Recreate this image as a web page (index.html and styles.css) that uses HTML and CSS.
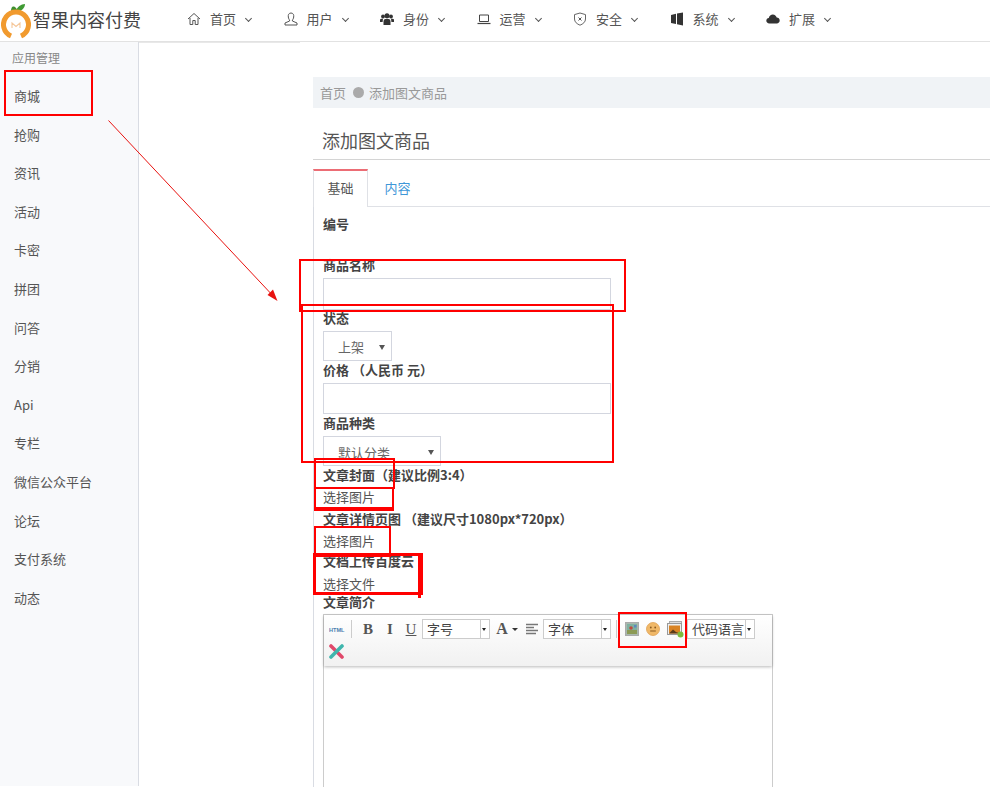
FILE: index.html
```html
<!DOCTYPE html>
<html lang="zh-CN">
<head>
<meta charset="utf-8">
<title>添加图文商品</title>
<link rel="stylesheet" href="styles.css">
</head>
<body>
<div class="page">
  <header class="topbar">
    <div class="brand">
      <svg class="logo" width="30" height="38" viewBox="0 0 30 38">
        <path d="M10 9 C10 5 12 3 15 6 L17 9 Z" fill="#3f8f2f"/>
        <path d="M15 9 C16 5 20 2 24 2 C24 6 20 10 15 10 Z" fill="#3f9a33"/>
        <path d="M10 34 A12.5 12.5 0 1 1 20 34" fill="none" stroke="#f19a2e" stroke-width="5"/>
        <circle cx="15" cy="23" r="9" fill="#fff"/>
        <path d="M11 26 V21 L15 24.5 L19 21 V26" fill="none" stroke="#f5c79a" stroke-width="1.1"/>
      </svg>
      <span class="brand-name">智果内容付费</span>
    </div>
    <nav class="nav">
      <a class="nav-item"><svg class="nav-icon" viewBox="0 0 14 14"><path d="M1 7 L7 1.5 L13 7 M3 6 V12.5 H5.8 V8.5 H8.2 V12.5 H11 V6" fill="none" stroke="#555" stroke-width="1"/></svg><span>首页</span><i class="chev"></i></a>
      <a class="nav-item"><svg class="nav-icon" viewBox="0 0 14 14"><path d="M7 1 C9.3 1 10 3 9.7 5 C9.5 6.6 8.8 7.6 8.4 8 V9 L13 11 V13 H1 V11 L5.6 9 V8 C5.2 7.6 4.5 6.6 4.3 5 C4 3 4.7 1 7 1 Z" fill="none" stroke="#555" stroke-width="1"/></svg><span>用户</span><i class="chev"></i></a>
      <a class="nav-item"><svg class="nav-icon" viewBox="0 0 14 14"><circle cx="3" cy="4.5" r="1.9" fill="#333"/><circle cx="11" cy="4.5" r="1.9" fill="#333"/><circle cx="7" cy="3.8" r="2.5" fill="#333"/><path d="M3.5 13 V9.5 C3.5 7.5 5 6.8 7 6.8 C9 6.8 10.5 7.5 10.5 9.5 V13 Z M0 10 V8 C0 7 1 6.8 3 6.8 L2.6 10 Z M14 10 V8 C14 7 13 6.8 11 6.8 L11.4 10 Z" fill="#333"/></svg><span>身份</span><i class="chev"></i></a>
      <a class="nav-item"><svg class="nav-icon" viewBox="0 0 14 14"><path d="M2.5 3 H11.5 V9.5 H2.5 Z" fill="none" stroke="#444"/><path d="M0.5 11.5 H13.5" stroke="#444" stroke-width="1.2"/></svg><span>运营</span><i class="chev"></i></a>
      <a class="nav-item"><svg class="nav-icon" viewBox="0 0 14 14"><path d="M7 1 L12.5 2.6 V7 C12.5 10 10 12 7 13.2 C4 12 1.5 10 1.5 7 V2.6 Z" fill="none" stroke="#666"/><path d="M5.5 5.5 L8.5 8.5 M8.5 5.5 L5.5 8.5" stroke="#555"/></svg><span>安全</span><i class="chev"></i></a>
      <a class="nav-item"><svg class="nav-icon" viewBox="0 0 14 14"><path d="M1 3 L6 1.8 V12 L1 11 Z M7 1.6 L13 0.5 V13.5 L7 12.2 Z" fill="#333"/></svg><span>系统</span><i class="chev"></i></a>
      <a class="nav-item"><svg class="nav-icon" viewBox="0 0 14 14"><path d="M3.4 11.5 C1.5 11.5 0.3 10.2 0.3 8.6 C0.3 7.1 1.4 6 2.8 5.9 C3.2 3.8 4.9 2.5 6.8 2.5 C8.8 2.5 10.3 3.9 10.7 5.6 C12.4 5.6 13.7 6.9 13.7 8.6 C13.7 10.2 12.4 11.5 10.8 11.5 Z" fill="#333"/></svg><span>扩展</span><i class="chev"></i></a>
    </nav>
  </header>
  <div class="topbar-shade"></div>

  <div class="layout">
    <aside class="sidebar">
      <div class="side-title">应用管理</div>
      <ul class="side-list">
        <li>商城</li><li>抢购</li><li>资讯</li><li>活动</li><li>卡密</li><li>拼团</li><li>问答</li><li>分销</li><li>Api</li><li>专栏</li><li>微信公众平台</li><li>论坛</li><li>支付系统</li><li>动态</li>
      </ul>
    </aside>

    <main class="main">
      <div class="breadcrumb"><span>首页</span><i class="crumb-dot"></i><span>添加图文商品</span></div>
      <h1 class="page-title">添加图文商品</h1>
      <div class="tabs">
        <a class="tab tab-active">基础</a>
        <a class="tab">内容</a>
      </div>
      <form class="form">
        <div class="field field-id"><label class="label">编号</label></div>
        <div class="field"><label class="label">商品名称</label><div class="input input-name"></div></div>
        <div class="field"><label class="label">状态</label><div class="select select-state"><span>上架</span><i class="caret"></i></div></div>
        <div class="field"><label class="label">价格 （人民币 元）</label><div class="input input-price"></div></div>
        <div class="field"><label class="label">商品种类</label><div class="select select-kind"><span>默认分类</span><i class="caret"></i></div></div>
        <div class="field"><label class="label label-up">文章封面（建议比例3:4）</label><a class="pick pick-wide">选择图片</a></div>
        <div class="field"><label class="label label-up">文章详情页图 （建议尺寸1080px*720px）</label><a class="pick pick-narrow">选择图片</a></div>
        <div class="field"><label class="label label-doc">文档上传百度云</label><a class="pick pick-tight">选择文件</a></div>
        <div class="field"><label class="label label-editor">文章简介</label>
          <div class="editor">
            <div class="toolbar">
              <svg class="tool tool-html" width="16" height="14" viewBox="0 0 16 14"><text x="0" y="10" class="html-text">HTML</text></svg>
              <i class="tool-sep sep-a"></i>
              <b class="tool-glyph glyph-b">B</b>
              <i class="tool-glyph glyph-i">I</i>
              <u class="tool-glyph glyph-u">U</u>
              <div class="tool-select"><span>字号</span><i class="drop"></i></div>
              <span class="tool-glyph glyph-a">A</span><i class="mini-caret"></i>
              <svg class="tool tool-align" width="14" height="14" viewBox="0 0 14 14"><path d="M1 2.5 H13 M1 5.5 H9 M1 8.5 H13 M1 11.5 H11" stroke="#777" stroke-width="1.4"/></svg>
              <div class="tool-select"><span>字体</span><i class="drop"></i></div>
              <i class="tool-sep sep-b"></i>
              <svg class="tool tool-pic" width="14" height="14" viewBox="0 0 14 14"><rect x="0.5" y="0.5" width="13" height="13" fill="#a9b8ae" stroke="#aaa"/><rect x="2" y="2" width="10" height="10" fill="#7fb0a0"/><rect x="2" y="8" width="10" height="4" fill="#8c9a55"/><circle cx="6" cy="6" r="1.8" fill="#c24a3c"/><rect x="9" y="3" width="2.5" height="2.5" fill="#5f86c0"/></svg>
              <svg class="tool tool-face" width="14" height="14" viewBox="0 0 14 14"><circle cx="7" cy="7" r="6.5" fill="#f0b868" stroke="#e0a050" stroke-width="0.8"/><circle cx="4.8" cy="5.5" r="0.9" fill="#8a5a20"/><circle cx="9.2" cy="5.5" r="0.9" fill="#8a5a20"/><path d="M4.2 9 H9.8" stroke="#8a5a20" stroke-width="1"/></svg>
              <svg class="tool tool-gallery" width="17" height="17" viewBox="0 0 17 17"><rect x="2.5" y="0.5" width="12" height="10" fill="#ddd" stroke="#aaa"/><rect x="0.5" y="2.5" width="14" height="11" fill="#eee" stroke="#999"/><rect x="2" y="4.5" width="11" height="8" fill="#d98324"/><path d="M2 12.5 L6 8.5 L9 11 L13 12.5 Z" fill="#5a3a18"/><circle cx="13.5" cy="13.5" r="3" fill="#7dbb3c"/></svg>
              <div class="tool-select"><span>代码语言</span><i class="drop"></i></div>
              <svg class="tool tool-x" width="15" height="15" viewBox="0 0 15 15"><path d="M2 2 L13 13" stroke="#e0486a" stroke-width="3.6" stroke-linecap="round"/><path d="M13 2 L2 13" stroke="#3fb6ad" stroke-width="3.6" stroke-linecap="round"/></svg>
            </div>
            <div class="editor-body"></div>
          </div>
        </div>
      </form>
    </main>
  </div>

  <div class="mark mark-shop"></div>
  <div class="mark mark-name"></div>
  <div class="mark mark-group"></div>
  <div class="mark mark-cover"></div>
  <div class="mark mark-cover-pick"></div>
  <div class="mark mark-detail"></div>
  <div class="mark mark-doc"></div>
  <div class="mark mark-doc-tail"></div>
  <div class="mark mark-tools"></div>
  <svg class="arrow" width="180" height="190" viewBox="0 0 180 190">
    <path d="M0.5 0.5 L168 179" stroke="#e8120f" stroke-width="1" fill="none"/>
    <path d="M169.5 181 L159.5 175 L165 169.5 Z" fill="#e8120f"/>
  </svg>
</div>
</body>
</html>
```
FILE: styles.css
```css
* { box-sizing: border-box; }
html, body { margin: 0; padding: 0; background: #fff; }
body { font-family: "Noto Sans CJK SC", "Noto Sans", sans-serif; font-size: 13px; color: #444; }
.page { position: relative; width: 990px; height: 787px; overflow: hidden; }

.topbar { display: flex; align-items: center; height: 42px; border-bottom: 1px solid #e2e2e2; }
.topbar-shade { width: 300px; height: 1px; background: #e8e8e8; }
.brand { display: flex; align-items: center; width: 187px; height: 41px; padding-left: 1px; }
.logo { flex: none; }
.brand-name { margin: -3px 0 0 2px; font-size: 18px; line-height: 24px; color: #444; }
.nav { display: flex; margin-top: -3px; }
.nav-item { display: flex; align-items: center; width: 96.5px; color: #555; font-size: 13px; line-height: 18px; }
.nav-icon { width: 14px; height: 14px; flex: none; margin-right: 9px; }
.chev { width: 5px; height: 5px; margin: -2px 0 0 10px; border-right: 1px solid #555; border-bottom: 1px solid #555; transform: rotate(45deg); }

.layout { display: flex; height: 744px; margin-top: -1px; }
.sidebar { flex: none; width: 139px; background: #f8f9fb; border-right: 1px solid #d9dce3; }
.side-title { padding: 7px 0 0 12px; height: 35px; font-size: 12px; line-height: 17px; color: #888; }
.side-list { list-style: none; margin: 0; padding: 0; }
.side-list li { height: 38.6px; padding-left: 14px; line-height: 38.6px; color: #555; font-size: 13px; }

.main { flex: 1; min-width: 0; padding: 35px 0 0 174px; }
.breadcrumb { display: flex; align-items: center; height: 31px; padding-left: 7px; background: #f0f3f6; color: #999; font-size: 13px; }
.crumb-dot { width: 11px; height: 11px; margin: 0 5px 0 7px; border-radius: 50%; background: #aaa; }
.page-title { height: 52px; margin: 0; padding: 19px 0 0 9px; border-bottom: 1px solid #d4d4d4; font-size: 18px; font-weight: 400; line-height: 26px; color: #555; }
.tabs { display: flex; height: 38px; margin-top: 9px; border-bottom: 1px solid #dfe1e6; }
.tab { width: 55px; height: 38px; padding-top: 9px; text-align: center; line-height: 20px; color: #3f97d8; font-size: 13px; }
.tab-active { border-top: 2px solid #ec6d75; border-left: 1px solid #dfe1e6; border-right: 1px solid #dfe1e6; background: #fff; color: #555; padding-top: 7px; }
.tab + .tab { margin-left: 1px; width: 57px; }

.form { padding: 9px 0 0 9px; border-left: 1px solid #d9dce3; height: 600px; }
.field { margin-bottom: 1px; }
.field-id { height: 40px; }
.label { display: block; margin-bottom: 5px; font-size: 13px; font-weight: 700; line-height: 16px; color: #444; }
.label-up { margin-bottom: 6px; }
.label-doc { margin-bottom: 7px; }
.label-editor { margin-bottom: 4px; margin-top: 1px; }
.pick { display: block; line-height: 16px; font-size: 13px; color: #555; }
.pick-wide { margin-bottom: 6px; }
.pick-narrow { margin-bottom: 4px; }
.pick-tight { margin-bottom: 2px; }
.input { width: 288px; border: 1px solid #d3d6df; background: #fff; }
.input-name { height: 32px; }
.input-price { height: 31px; }
.field:has(.input-name) { margin-bottom: 0; }
.select { position: relative; height: 30px; padding-left: 14px; border: 1px solid #d3d6df; line-height: 29px; color: #666; font-size: 13px; }
.select-state { width: 69px; }
.select-kind { width: 118px; line-height: 31px; }
.caret { position: absolute; right: 6px; top: 13px; width: 0; height: 0; border-left: 3px solid transparent; border-right: 3px solid transparent; border-top: 5px solid #555; }

.editor { width: 450px; height: 240px; border: 1px solid #ccc; border-bottom: 0; }
.toolbar { position: relative; display: flex; flex-wrap: wrap; align-items: center; align-content: flex-start; height: 51px; padding: 4px 10px 0 5px; background: linear-gradient(#fff, #f1f1f1); box-shadow: 0 1px 3px rgba(0,0,0,.28); }
.tool { flex: none; }
.tool-html { margin-right: 6px; }
.html-text { font: 700 5.6px "Liberation Sans", sans-serif; fill: #4a7fb0; }
.tool-sep { width: 1px; height: 18px; background: #ccc; flex: none; }
.sep-a { margin-right: 10px; }
.sep-b { margin: 0 8px 0 5px; }
.tool-glyph { flex: none; width: 12px; text-align: center; font: 700 15px/20px "Liberation Serif", serif; color: #555; }
.glyph-b { margin-right: 10px; }
.glyph-i { margin-right: 9px; }
.glyph-u { margin-right: 5px; font-weight: 400; }
.glyph-a { font-size: 16px; margin-left: 6px; }
.mini-caret { flex: none; width: 0; height: 0; margin: 0 7px 0 4px; border-left: 3px solid transparent; border-right: 3px solid transparent; border-top: 3px solid #333; }
.tool-align { margin-right: 4px; }
.tool-select { flex: none; position: relative; width: 68px; height: 20px; padding-left: 4px; border: 1px solid #ccc; background: #fff; line-height: 18px; font-size: 13px; color: #444; }
.drop { position: absolute; right: 0; top: 0; width: 9px; height: 18px; border-left: 1px solid #ccc; }
.drop::after { content: ""; position: absolute; left: 1px; top: 8px; border-left: 2.5px solid transparent; border-right: 2.5px solid transparent; border-top: 3px solid #222; }
.tool-pic { margin-right: 7px; }
.tool-face { margin-right: 7px; }
.tool-gallery { margin-right: 3px; }
.tool-x { margin-top: 5px; }
.editor-body { height: 189px; background: #fff; }

.mark { position: absolute; border: 2px solid #f00; }
.mark-shop { left: 4px; top: 70px; width: 89px; height: 46px; }
.mark-name { left: 299px; top: 259px; width: 327px; height: 53px; }
.mark-group { left: 301px; top: 304px; width: 313px; height: 159px; }
.mark-cover { left: 314px; top: 458px; width: 81px; height: 31px; }
.mark-cover-pick { left: 314px; top: 487px; width: 80px; height: 24px; border-bottom-width: 4px; }
.mark-detail { left: 314px; top: 526px; width: 77px; height: 31px; }
.mark-doc { left: 313px; top: 553px; width: 110px; height: 42px; border-width: 3px 5px 3px 3px; }
.mark-doc-tail { left: 418px; top: 593px; width: 3px; height: 5px; border: 0; background: #f00; }
.mark-tools { left: 618px; top: 612px; width: 69px; height: 36px; }
.arrow { position: absolute; left: 108px; top: 120px; }
```
